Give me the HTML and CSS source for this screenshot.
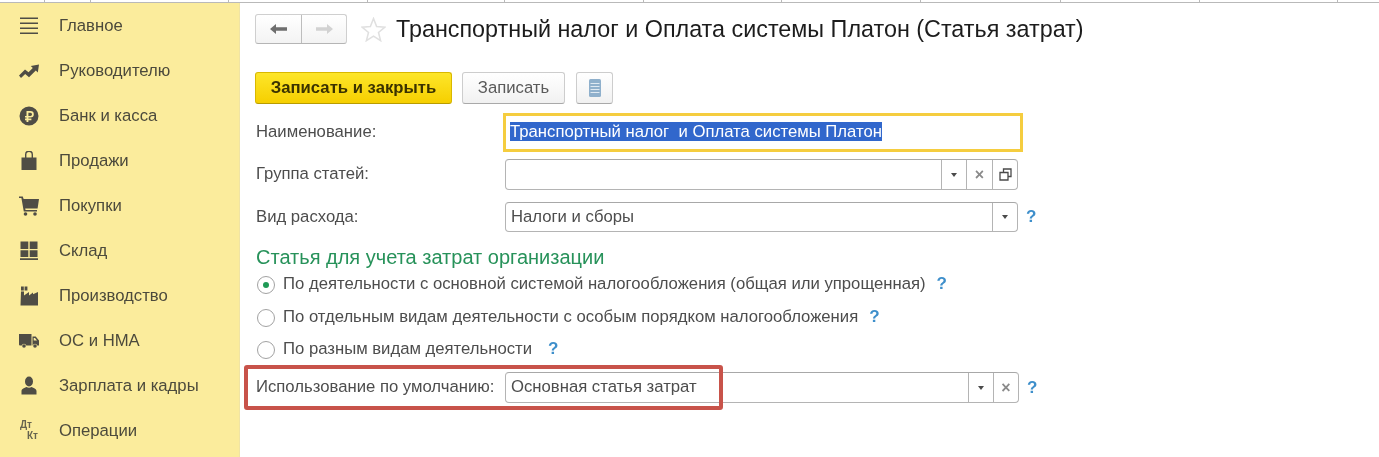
FILE: index.html
```html
<!DOCTYPE html>
<html lang="ru">
<head>
<meta charset="utf-8">
<title>Транспортный налог и Оплата системы Платон</title>
<link rel="stylesheet" href="styles.css">
</head>
<body>
<div class="topstrip">
  <i class="tick t1"></i><i class="tick t2"></i><i class="tick t3"></i><i class="tick t4"></i><i class="tick t5"></i><i class="tick t6"></i><i class="tick t7"></i><i class="tick t11"></i><i class="tick t8"></i><i class="tick t9"></i><i class="tick t10"></i>
</div>
<div class="app">
  <nav class="side">
    <a class="item"><svg class="ic" viewBox="0 0 20 20"><path d="M1 1.500h18v1.500H1zM1 6.500h18V8H1zM1 11.500h18V13H1zM1 16.500h18V18H1z"/></svg><span>Главное</span></a>
    <a class="item"><svg class="ic" viewBox="0 0 20 20"><path d="M0 14.500l6-6 3.500 2.800 4.300-4.300-2-2 8.200-1.500-1.200 8-2-2-6.800 6.800L6.200 13 2 17z"/></svg><span>Руководителю</span></a>
    <a class="item"><svg class="ic" viewBox="0 0 20 20"><path fill-rule="evenodd" d="M10 .500a9.500 9.500 0 1 0 0 19 9.500 9.500 0 0 0 0-19zM7.500 5h4a3.300 3.300 0 0 1 0 6.600H9.400v1h3v1.600h-3V16H7.500v-1.800H6v-1.600h1.500v-1H6v-1.600h1.500zm1.900 1.700V10h2a1.650 1.650 0 0 0 0-3.300z"/></svg><span>Банк и касса</span></a>
    <a class="item"><svg class="ic" viewBox="0 0 20 20"><path fill-rule="evenodd" d="M2.500 6.500h3.500V3.500a4 4 0 0 1 8 0v3h3.500v12.500h-15zM7.400 6.500h5.200v-3a2.600 2.600 0 0 0-5.200 0z"/></svg><span>Продажи</span></a>
    <a class="item"><svg class="ic" viewBox="0 0 20 20"><path d="M0 .500h3.800l.8 2.500H20l-1.400 9.500H6.200l.3 1.500H18v1.600H4.800L2.400 2.100H0z"/><circle cx="6.500" cy="18" r="1.800"/><circle cx="16" cy="18" r="1.800"/></svg><span>Покупки</span></a>
    <a class="item"><svg class="ic" viewBox="0 0 20 20"><path d="M1.500 .500h7.800v7.500H1.500zM10.700 .500h7.800v7.500h-7.800zM1.500 9.200h7.800v6.800H1.500zM10.700 9.200h7.800v6.800h-7.800zM1 17.300h18v1.700H1z"/></svg><span>Склад</span></a>
    <a class="item"><svg class="ic" viewBox="0 0 20 20"><path d="M2 .500h2.800v4H2zM5.600 .500h2.800v4H5.600zM2 5.500h3v4l5-3.500v3.500l4-3v1.800l5-2.300v13.500H1.500z"/></svg><span>Производство</span></a>
    <a class="item"><svg class="ic ic-wide" viewBox="0 0 20 14"><path fill-rule="evenodd" d="M0 0h12.500v11.500H7.300a2.400 2.400 0 0 0-4.600 0H1a1 1 0 0 1-1-1zM13.500 2.500h3.200L20 6.500v5h-1.700a2.400 2.400 0 0 0-4.600 0h-.2zm1.200 1.500v2.500H18L16 4z"/><circle cx="5" cy="12" r="1.800"/><circle cx="16" cy="12" r="1.800"/></svg><span>ОС и НМА</span></a>
    <a class="item"><svg class="ic" viewBox="0 0 20 20"><ellipse cx="10" cy="5.500" rx="4" ry="5"/><path d="M2.500 18.500v-3.500c0-2.300 3.200-3.200 5-4 1.500 1 3.500 1 5 0 1.800.8 5 1.700 5 4v3.500z"/></svg><span>Зарплата и кадры</span></a>
    <a class="item"><span class="dtkt"><b class="dt">Дт</b><b class="kt">Кт</b></span><span>Операции</span></a>
  </nav>
  <main class="main">
    <header class="head">
      <div class="navbtns">
        <button class="nav-b"><svg viewBox="0 0 17 10" width="17" height="10"><path class="back" d="M0 5l6-5v3.300h11v3.400H6V10z"/></svg></button>
        <button class="nav-b"><svg viewBox="0 0 17 10" width="17" height="10"><path class="fwd" d="M17 5l-6-5v3.300H0v3.400h11V10z"/></svg></button>
      </div>
      <svg class="star" viewBox="0 0 24 24"><path d="M12 1.500l3 7.600 8 .6-6.200 5.100 2 7.900-6.800-4.300-6.800 4.300 2-7.900L1 9.700l8-.6z"/></svg>
      <h1 class="title">Транспортный налог и Оплата системы Платон (Статья затрат)</h1>
    </header>
    <div class="toolbar">
      <button class="btn primary">Записать и закрыть</button>
      <button class="btn">Записать</button>
      <button class="btn icon"><svg viewBox="0 0 12 18" width="12" height="18"><rect width="12" height="18" rx="1.500" fill="#8fb0cc"/><path d="M1.500 4.500h9M1.500 7.500h9M1.500 10.500h9M1.500 13.500h9" stroke="#dfe9f2" stroke-width="1"/></svg></button>
    </div>
    <div class="row r-name">
      <label class="lbl">Наименование:</label>
      <div class="name-input"><span class="sel">Транспортный налог&nbsp; и Оплата системы Платон</span></div>
    </div>
    <div class="row r-group">
      <label class="lbl">Группа статей:</label>
      <div class="field">
        <span class="val"></span>
        <span class="fb"><i class="tri"></i></span>
        <span class="fb x x-mid">×</span>
        <span class="fb"><svg viewBox="0 0 13 13" width="13" height="13"><path d="M4.500 4V1h7.500v7.500H9M1 4.500h8V12H1z" fill="none" stroke="#4a4a4a" stroke-width="1.300"/></svg></span>
      </div>
    </div>
    <div class="row r-kind">
      <label class="lbl">Вид расхода:</label>
      <div class="field">
        <span class="val">Налоги и сборы</span>
        <span class="fb"><i class="tri"></i></span>
      </div>
      <span class="q">?</span>
    </div>
    <h2 class="section">Статья для учета затрат организации</h2>
    <div class="radio r1"><i class="dot on"></i><span>По деятельности с основной системой налогообложения (общая или упрощенная)</span><span class="q">?</span></div>
    <div class="radio r2"><i class="dot"></i><span>По отдельным видам деятельности с особым порядком налогообложения</span><span class="q">?</span></div>
    <div class="radio r3"><i class="dot"></i><span>По разным видам деятельности</span><span class="q">?</span></div>
    <div class="row r-use">
      <label class="lbl">Использование по умолчанию:</label>
      <div class="field wide">
        <span class="val">Основная статья затрат</span>
        <span class="fb"><i class="tri"></i></span>
        <span class="fb x">×</span>
      </div>
      <span class="q">?</span>
      <div class="redbox"></div>
    </div>
  </main>
</div>
</body>
</html>
```
FILE: styles.css
```css
* { box-sizing: border-box; }
html, body { margin: 0; padding: 0; }
body { width: 1379px; height: 457px; overflow: hidden; background: #fff; font-family: "Liberation Sans", Arial, sans-serif; color: #4a4a4a; position: relative; filter: blur(.35px); }
.topstrip { height: 3px; border-bottom: 1px solid #b9b9b9; position: relative; background: #fff; }
.tick { position: absolute; top: 0; width: 1px; height: 2px; background: #b9b9b9; }
.t1 { left: 44px; } .t2 { left: 90px; } .t3 { left: 228px; } .t4 { left: 367px; } .t5 { left: 504px; } .t6 { left: 643px; } .t7 { left: 781px; } .t11 { left: 920px; } .t8 { left: 1060px; } .t9 { left: 1199px; } .t10 { left: 1337px; }
.app { display: flex; height: 454px; }
.side { width: 240px; background: #fbec9c; border-right: 1px solid #f0e4a4; flex: none; }
.item { display: flex; align-items: center; height: 45px; padding-left: 19px; font-size: 16.700px; color: #4c4a3c; }
.ic { width: 20px; height: 20px; fill: #4f4d45; flex: none; margin-right: 20px; }
.ic-wide { height: 14px; }
.dtkt { width: 20px; height: 20px; margin-right: 20px; position: relative; flex: none; font-size: 10px; line-height: 12px; color: #66644f; }
.dtkt b { position: absolute; }
.dt { left: 1px; top: -2px; }
.kt { left: 8px; top: 9px; }
.main { flex: 1; padding-left: 15px; position: relative; background: #fff; }
.head { display: flex; align-items: center; height: 30px; margin-top: 11px; }
.navbtns { display: flex; width: 92px; height: 30px; border: 1px solid #cfcfcf; border-bottom-color: #b5b5b5; border-radius: 3px; background: linear-gradient(#fff, #f3f3f3); }
.nav-b { flex: 1; border: 0; background: none; padding: 0; display: flex; align-items: center; justify-content: center; }
.nav-b:first-child { flex: 0 0 46px; border-right: 1px solid #bdbdbd; }
.back { fill: #6e6e6e; }
.fwd { fill: #d2d2d2; }
.star { width: 25px; height: 25px; margin-left: 14px; fill: #fff; stroke: #e0e0e0; stroke-width: 1.500; flex: none; }
.title { margin: 0 0 0 10px; font-weight: 400; font-size: 23.350px; color: #1c1c1c; white-space: nowrap; line-height: 30px; }
.toolbar { display: flex; margin-top: 28px; height: 33px; }
.btn { height: 32px; width: 103px; margin-left: 10px; border: 1px solid #cdcdcd; border-bottom-color: #a9a9a9; border-radius: 3px; background: linear-gradient(#fff, #f1f1f1); font: 16.700px "Liberation Sans", Arial, sans-serif; color: #5a5a5a; padding: 0; display: flex; align-items: center; justify-content: center; }
.primary { width: 197px; margin-left: 0; background: linear-gradient(#fde62a, #f6cf00); border-color: #d9b800; border-bottom-color: #b89c00; font-weight: 700; color: #3a3200; }
.icon { width: 37px; margin-left: 11px; }
.row { display: flex; align-items: center; position: relative; }
.lbl { width: 250px; padding-left: 1px; font-size: 16.700px; flex: none; color: #4d4d4d; white-space: nowrap; }
.r-name { margin-top: 8px; height: 39px; }
.r-name .lbl { padding-bottom: 1px; }
.name-input { width: 520px; height: 39px; margin-left: -2px; border: 3px solid #f5cd3f; padding: 6px 0 0 4px; font-size: 16.700px; line-height: 19px; color: #fff; }
.sel { background: #3167cc; display: inline-block; height: 19px; white-space: pre; }
.r-group { margin-top: 7px; height: 31px; }
.r-group .lbl { padding-bottom: 2px; }
.r-kind { margin-top: 12px; height: 30px; }
.field { width: 513px; height: 100%; border: 1px solid #b4b4b4; border-top-color: #a8a8a8; border-radius: 4px; display: flex; font-size: 16.700px; background: #fff; }
.val { flex: 1; padding-left: 5px; display: flex; align-items: center; color: #4d4d4d; }
.fb { width: 25px; flex: none; border-left: 1px solid #b4b4b4; display: flex; align-items: center; justify-content: center; }
.x { font-size: 16px; color: #8a8a8a; font-weight: 700; }
.x-mid { width: 26px; }
.tri { width: 0; height: 0; border-left: 3.500px solid transparent; border-right: 3.500px solid transparent; border-top: 4px solid #4a4a4a; }
.q { color: #3e8fcb; font-weight: 700; font-size: 17px; margin-left: 8px; }
.section { margin: 13px 0 0 1px; font-weight: 400; font-size: 20px; line-height: 24px; color: #27925a; height: 24px; }
.radio { display: flex; align-items: center; font-size: 16.700px; height: 20px; margin-left: 2px; color: #4d4d4d; white-space: nowrap; }
.r1 { margin-top: 5px; }
.r2 { margin-top: 13px; }
.r3 { margin-top: 12px; }
.r1 .q { margin-left: 11px; } .r2 .q { margin-left: 11px; } .r3 .q { margin-left: 16px; }
.dot { width: 18px; height: 18px; margin-top: 2px; border: 1px solid #a2a2a2; border-radius: 50%; margin-right: 8px; background: #fff; flex: none; position: relative; }
.on::after { content: ""; position: absolute; left: 5px; top: 5px; width: 6px; height: 6px; border-radius: 50%; background: #1f9a56; }
.r-use { margin-top: 13px; height: 31px; }
.r-use .lbl, .r-use .val { padding-bottom: 2px; }
.wide { width: 514px; }
.redbox { position: absolute; left: -11px; top: -7px; width: 479px; height: 45px; border: 4px solid #c8534a; border-radius: 3px; }
```
